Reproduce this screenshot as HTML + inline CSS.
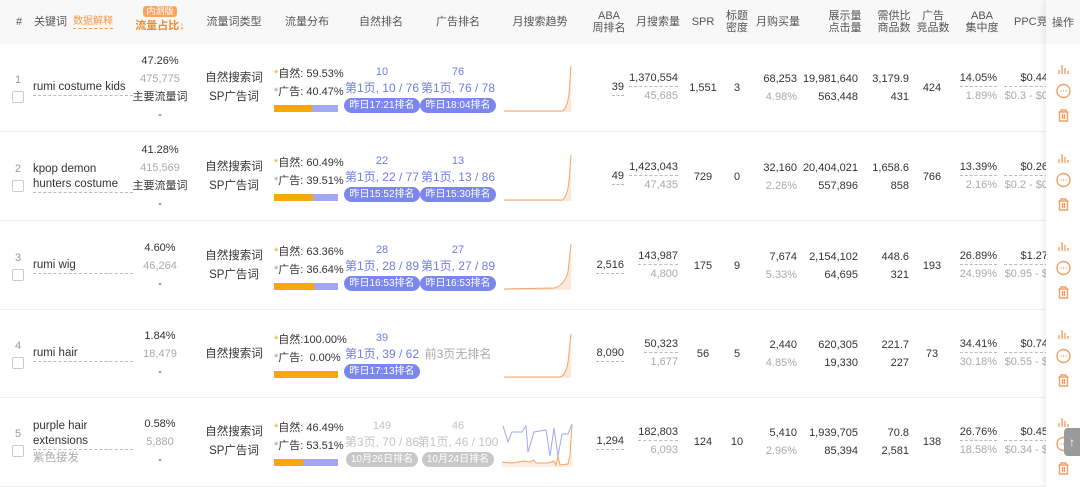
<!DOCTYPE html>
<html><head><meta charset="utf-8"><style>
*{margin:0;padding:0;box-sizing:border-box}
body{width:1080px;height:487px;overflow:hidden;background:#fff;font-family:"Liberation Sans","Noto Sans CJK SC",sans-serif;font-size:11px;color:#333;position:relative}
.hd{position:absolute;left:0;top:0;width:1080px;height:44px;background:#f8f8f8;color:#555}
.hc{position:absolute;top:0;height:44px;display:flex;flex-direction:column;justify-content:center;align-items:center;line-height:12px;text-align:center}
.row{position:absolute;left:0;width:1080px;height:88px;border-bottom:1px solid #eee;background:#fff}
.c{position:absolute;top:0;height:88px;display:flex;flex-direction:column;justify-content:center;line-height:18px;white-space:nowrap}
.ctr{align-items:center;text-align:center}
.rt{align-items:flex-end;text-align:right}
.g{color:#aaa}
.b{color:#6f7de8}
.badge{display:inline-block;background:#7b86ee;color:#fff;border-radius:8px;font-size:10px;line-height:15px;padding:0 5px;margin-top:2px}
.badge.gr{background:#c8c8c8}
.dash{border-bottom:1px dashed #bbb;line-height:15px}
.bar{width:64px;height:7px;background:#a3a8f2;margin-top:4px;position:relative}
.bar i{position:absolute;left:0;top:0;height:7px;background:#f7a90b}
.st{color:#f5a623;font-weight:normal}.sp{color:#8f96ee;font-weight:normal}
.cb{width:12px;height:12px;border:1px solid #ccc;border-radius:2px;margin-top:4px}
.ops{position:absolute;left:1046px;top:0;width:34px;height:487px;background:#fff;box-shadow:-3px 0 5px rgba(0,0,0,.06)}
.kw{left:33px;width:100px;font-size:11.5px}
.pct{left:125px;width:70px}
.tp{left:199px;width:70px;line-height:19px;font-size:11.5px}
.dist{left:274px;width:72px}
.nr{left:343px;width:78px;line-height:16px}
.ar{left:419px;width:78px;line-height:16px}
.nr span:nth-child(2),.ar span:nth-child(2){font-size:12px}
.tr{position:absolute;left:504px;top:20px}
</style></head><body>
<div class="hd">
 <div class="hc" style="left:12px;width:14px">#</div>
 <div class="hc" style="left:34px;width:80px;flex-direction:row;justify-content:flex-start">关键词&nbsp;<span style="color:#f29a4a;font-size:10px;border-bottom:1px dashed #f29a4a;margin-left:3px">数据解释</span></div>
 <div class="hc" style="left:130px;width:60px;color:#f08a2c;font-weight:bold"><span style="background:#f7a561;color:#fff;font-size:9px;border-radius:3px;padding:0 3px;line-height:11px;margin-top:-6px;margin-bottom:3px;font-weight:normal">内测版</span>流量占比↓</div>
 <div class="hc" style="left:199px;width:70px">流量词类型</div>
 <div class="hc" style="left:277px;width:60px">流量分布</div>
 <div class="hc" style="left:351px;width:60px">自然排名</div>
 <div class="hc" style="left:428px;width:60px">广告排名</div>
 <div class="hc" style="left:505px;width:70px">月搜索趋势</div>
 <div class="hc" style="left:589px;width:40px">ABA<br>周排名</div>
 <div class="hc" style="left:630px;width:56px">月搜索量</div>
 <div class="hc" style="left:688px;width:30px">SPR</div>
 <div class="hc" style="left:722px;width:30px">标题<br>密度</div>
 <div class="hc" style="left:753px;width:50px">月购买量</div>
 <div class="hc" style="left:820px;width:50px">展示量<br>点击量</div>
 <div class="hc" style="left:872px;width:44px">需供比<br>商品数</div>
 <div class="hc" style="left:915px;width:36px">广告<br>竞品数</div>
 <div class="hc" style="left:962px;width:40px">ABA<br>集中度</div>
 <div class="hc" style="left:1014px;width:50px;align-items:flex-start">PPC竞价</div>
</div>

<!-- row1 -->
<div class="row" style="top:44px">
 <div class="c ctr" style="left:10px;width:16px;color:#999"><span style="line-height:14px">1</span><div class="cb"></div></div>
 <div class="c kw"><span class="dash">rumi costume kids</span></div>
 <div class="c ctr pct"><span>47.26%</span><span class="g">475,775</span><span>主要流量词</span><span>-</span></div>
 <div class="c ctr tp"><span>自然搜索词</span><span>SP广告词</span></div>
 <div class="c dist"><span><b class="st">*</b>自然: 59.53%</span><span><b class="sp">*</b>广告: 40.47%</span><div class="bar"><i style="width:60%"></i></div></div>
 <div class="c ctr b nr"><span>10</span><span>第1页, 10 / 76</span><span class="badge">昨日17:21排名</span></div>
 <div class="c ctr b ar"><span>76</span><span>第1页, 76 / 78</span><span class="badge">昨日18:04排名</span></div>
 <svg class="tr" width="68" height="48"><path d="M0 47 L58 47 Q63 45 65 30 L67 2 L67 48 L0 48Z" fill="#fde9d9"/><path d="M0 47 L58 47 Q63 45 65 30 L67 2" stroke="#f5a46a" fill="none"/></svg>
 <div class="c rt" style="left:590px;width:34px"><span class="dash">39</span></div>
 <div class="c rt" style="left:620px;width:58px"><span class="dash">1,370,554</span><span class="g">45,685</span></div>
 <div class="c ctr" style="left:688px;width:30px">1,551</div>
 <div class="c ctr" style="left:725px;width:24px">3</div>
 <div class="c rt" style="left:750px;width:47px"><span>68,253</span><span class="g">4.98%</span></div>
 <div class="c rt" style="left:790px;width:68px"><span>19,981,640</span><span>563,448</span></div>
 <div class="c rt" style="left:862px;width:47px"><span>3,179.9</span><span>431</span></div>
 <div class="c ctr" style="left:918px;width:28px">424</div>
 <div class="c rt" style="left:950px;width:47px"><span class="dash">14.05%</span><span class="g">1.89%</span></div>
 <div class="c" style="left:1000px;width:48px;overflow:hidden;align-items:flex-end"><span class="dash" style="padding-left:16px">$0.44</span><span class="g">$0.3 - $0</span></div>
</div>
<!-- row2 -->
<div class="row" style="top:133px">
 <div class="c ctr" style="left:10px;width:16px;color:#999"><span style="line-height:14px">2</span><div class="cb"></div></div>
 <div class="c kw" style="line-height:16px"><span>kpop demon</span><span class="dash">hunters costume</span></div>
 <div class="c ctr pct"><span>41.28%</span><span class="g">415,569</span><span>主要流量词</span><span>-</span></div>
 <div class="c ctr tp"><span>自然搜索词</span><span>SP广告词</span></div>
 <div class="c dist"><span><b class="st">*</b>自然: 60.49%</span><span><b class="sp">*</b>广告: 39.51%</span><div class="bar"><i style="width:61%"></i></div></div>
 <div class="c ctr b nr"><span>22</span><span>第1页, 22 / 77</span><span class="badge">昨日15:52排名</span></div>
 <div class="c ctr b ar"><span>13</span><span>第1页, 13 / 86</span><span class="badge">昨日15:30排名</span></div>
 <svg class="tr" width="68" height="48"><path d="M0 47 L58 47 Q63 45 65 28 L67 2 L67 48 L0 48Z" fill="#fde9d9"/><path d="M0 47 L58 47 Q63 45 65 28 L67 2" stroke="#f5a46a" fill="none"/></svg>
 <div class="c rt" style="left:590px;width:34px"><span class="dash">49</span></div>
 <div class="c rt" style="left:620px;width:58px"><span class="dash">1,423,043</span><span class="g">47,435</span></div>
 <div class="c ctr" style="left:688px;width:30px">729</div>
 <div class="c ctr" style="left:725px;width:24px">0</div>
 <div class="c rt" style="left:750px;width:47px"><span>32,160</span><span class="g">2.26%</span></div>
 <div class="c rt" style="left:790px;width:68px"><span>20,404,021</span><span>557,896</span></div>
 <div class="c rt" style="left:862px;width:47px"><span>1,658.6</span><span>858</span></div>
 <div class="c ctr" style="left:918px;width:28px">766</div>
 <div class="c rt" style="left:950px;width:47px"><span class="dash">13.39%</span><span class="g">2.16%</span></div>
 <div class="c" style="left:1000px;width:48px;overflow:hidden;align-items:flex-end"><span class="dash" style="padding-left:16px">$0.26</span><span class="g">$0.2 - $0</span></div>
</div>
<!-- row3 -->
<div class="row" style="top:222px">
 <div class="c ctr" style="left:10px;width:16px;color:#999"><span style="line-height:14px">3</span><div class="cb"></div></div>
 <div class="c kw"><span class="dash">rumi wig</span></div>
 <div class="c ctr pct"><span>4.60%</span><span class="g">46,264</span><span>-</span></div>
 <div class="c ctr tp"><span>自然搜索词</span><span>SP广告词</span></div>
 <div class="c dist"><span><b class="st">*</b>自然: 63.36%</span><span><b class="sp">*</b>广告: 36.64%</span><div class="bar"><i style="width:63%"></i></div></div>
 <div class="c ctr b nr"><span>28</span><span>第1页, 28 / 89</span><span class="badge">昨日16:53排名</span></div>
 <div class="c ctr b ar"><span>27</span><span>第1页, 27 / 89</span><span class="badge">昨日16:53排名</span></div>
 <svg class="tr" width="68" height="48"><path d="M0 47 L50 46 Q60 44 64 30 L67 2 L67 48 L0 48Z" fill="#fde9d9"/><path d="M0 47 L50 46 Q60 44 64 30 L67 2" stroke="#f5a46a" fill="none"/></svg>
 <div class="c rt" style="left:590px;width:34px"><span class="dash">2,516</span></div>
 <div class="c rt" style="left:620px;width:58px"><span class="dash">143,987</span><span class="g">4,800</span></div>
 <div class="c ctr" style="left:688px;width:30px">175</div>
 <div class="c ctr" style="left:725px;width:24px">9</div>
 <div class="c rt" style="left:750px;width:47px"><span>7,674</span><span class="g">5.33%</span></div>
 <div class="c rt" style="left:790px;width:68px"><span>2,154,102</span><span>64,695</span></div>
 <div class="c rt" style="left:862px;width:47px"><span>448.6</span><span>321</span></div>
 <div class="c ctr" style="left:918px;width:28px">193</div>
 <div class="c rt" style="left:950px;width:47px"><span class="dash">26.89%</span><span class="g">24.99%</span></div>
 <div class="c" style="left:1000px;width:48px;overflow:hidden;align-items:flex-end"><span class="dash" style="padding-left:16px">$1.27</span><span class="g">$0.95 - $</span></div>
</div>
<!-- row4 -->
<div class="row" style="top:310px">
 <div class="c ctr" style="left:10px;width:16px;color:#999"><span style="line-height:14px">4</span><div class="cb"></div></div>
 <div class="c kw"><span class="dash">rumi hair</span></div>
 <div class="c ctr pct"><span>1.84%</span><span class="g">18,479</span><span>-</span></div>
 <div class="c ctr tp"><span>自然搜索词</span></div>
 <div class="c dist"><span><b class="st">*</b>自然:100.00%</span><span><b class="sp">*</b>广告: &nbsp;0.00%</span><div class="bar"><i style="width:100%"></i></div></div>
 <div class="c ctr b nr"><span>39</span><span>第1页, 39 / 62</span><span class="badge">昨日17:13排名</span></div>
 <div class="c ctr g ar" style="font-size:12px">前3页无排名</div>
 <svg class="tr" width="68" height="48"><path d="M0 47 L56 47 Q62 45 64 32 L67 4 L67 48 L0 48Z" fill="#fde9d9"/><path d="M0 47 L56 47 Q62 45 64 32 L67 4" stroke="#f5a46a" fill="none"/></svg>
 <div class="c rt" style="left:590px;width:34px"><span class="dash">8,090</span></div>
 <div class="c rt" style="left:620px;width:58px"><span class="dash">50,323</span><span class="g">1,677</span></div>
 <div class="c ctr" style="left:688px;width:30px">56</div>
 <div class="c ctr" style="left:725px;width:24px">5</div>
 <div class="c rt" style="left:750px;width:47px"><span>2,440</span><span class="g">4.85%</span></div>
 <div class="c rt" style="left:790px;width:68px"><span>620,305</span><span>19,330</span></div>
 <div class="c rt" style="left:862px;width:47px"><span>221.7</span><span>227</span></div>
 <div class="c ctr" style="left:918px;width:28px">73</div>
 <div class="c rt" style="left:950px;width:47px"><span class="dash">34.41%</span><span class="g">30.18%</span></div>
 <div class="c" style="left:1000px;width:48px;overflow:hidden;align-items:flex-end"><span class="dash" style="padding-left:16px">$0.74</span><span class="g">$0.55 - $</span></div>
</div>
<!-- row5 -->
<div class="row" style="top:398px;height:89px">
 <div class="c ctr" style="left:10px;width:16px;color:#999"><span style="line-height:14px">5</span><div class="cb"></div></div>
 <div class="c kw" style="line-height:16px"><span>purple hair</span><span class="dash">extensions</span><span class="g">紫色接发</span></div>
 <div class="c ctr pct"><span>0.58%</span><span class="g">5,880</span><span>-</span></div>
 <div class="c ctr tp"><span>自然搜索词</span><span>SP广告词</span></div>
 <div class="c dist"><span><b class="st">*</b>自然: 46.49%</span><span><b class="sp">*</b>广告: 53.51%</span><div class="bar"><i style="width:46%"></i></div></div>
 <div class="c ctr nr" style="color:#c4c4c4"><span>149</span><span>第3页, 70 / 86</span><span class="badge gr">10月26日排名</span></div>
 <div class="c ctr ar" style="color:#c4c4c4"><span>46</span><span>第1页, 46 / 100</span><span class="badge gr">10月24日排名</span></div>
 <svg style="position:absolute;left:500px;top:22px" width="75" height="48"><path d="M2 42 L12 43 L24 41 L30 42 L34 40 L36 43 L48 43 L54 41 L56 45 L58 36 L60 45 L68 44 L70 35 L72 4 L72 47 L2 47Z" fill="#fdeee2"/><path d="M2 42 L12 43 L24 41 L30 42 L34 40 L36 43 L48 43 L54 41 L56 45 L58 36 L60 45 L68 44 L70 35 L72 4" stroke="#f5a46a" fill="none"/><path d="M3 6 L8 22 L12 12 L22 12 L26 6 L28 32 L34 12 L46 10 L50 36 L54 8 L58 36 L62 14 L68 14 L72 4" stroke="#a3a8f2" fill="none"/></svg>
 <div class="c rt" style="left:590px;width:34px"><span class="dash">1,294</span></div>
 <div class="c rt" style="left:620px;width:58px"><span class="dash">182,803</span><span class="g">6,093</span></div>
 <div class="c ctr" style="left:688px;width:30px">124</div>
 <div class="c ctr" style="left:725px;width:24px">10</div>
 <div class="c rt" style="left:750px;width:47px"><span>5,410</span><span class="g">2.96%</span></div>
 <div class="c rt" style="left:790px;width:68px"><span>1,939,705</span><span>85,394</span></div>
 <div class="c rt" style="left:862px;width:47px"><span>70.8</span><span>2,581</span></div>
 <div class="c ctr" style="left:918px;width:28px">138</div>
 <div class="c rt" style="left:950px;width:47px"><span class="dash">26.76%</span><span class="g">18.58%</span></div>
 <div class="c" style="left:1000px;width:48px;overflow:hidden;align-items:flex-end"><span class="dash" style="padding-left:16px">$0.45</span><span class="g">$0.34 - $</span></div>
</div>

<div class="ops">
 <div style="height:44px;background:#f8f8f8;display:flex;align-items:center;justify-content:center;color:#555">操作</div>
 <svg width="34" height="443" style="position:absolute;left:0;top:44px" fill="none" stroke="#f5a064" stroke-width="1.4">
  <g id="r1">
   <path d="M13 30v-4M16 30v-9M19 30v-6M22 30v-3"/>
   <circle cx="17.5" cy="47" r="6.5"/><path d="M14.5 47h1M17 47h1M19.5 47h1"/>
   <path d="M12.5 68h10M15 68v-2h5v2M13.5 68v9h8v-9M16.5 70v5M18.5 70v5"/>
  </g>
  <use href="#r1" y="89"/><use href="#r1" y="177"/><use href="#r1" y="265"/><use href="#r1" y="353"/>
 </svg>
</div>
<div style="position:absolute;left:1064px;top:428px;width:16px;height:28px;background:#9a9a9a;border-radius:4px 0 0 4px;color:#fff;font-size:12px;display:flex;align-items:center;justify-content:center">↑</div>
</body></html>
